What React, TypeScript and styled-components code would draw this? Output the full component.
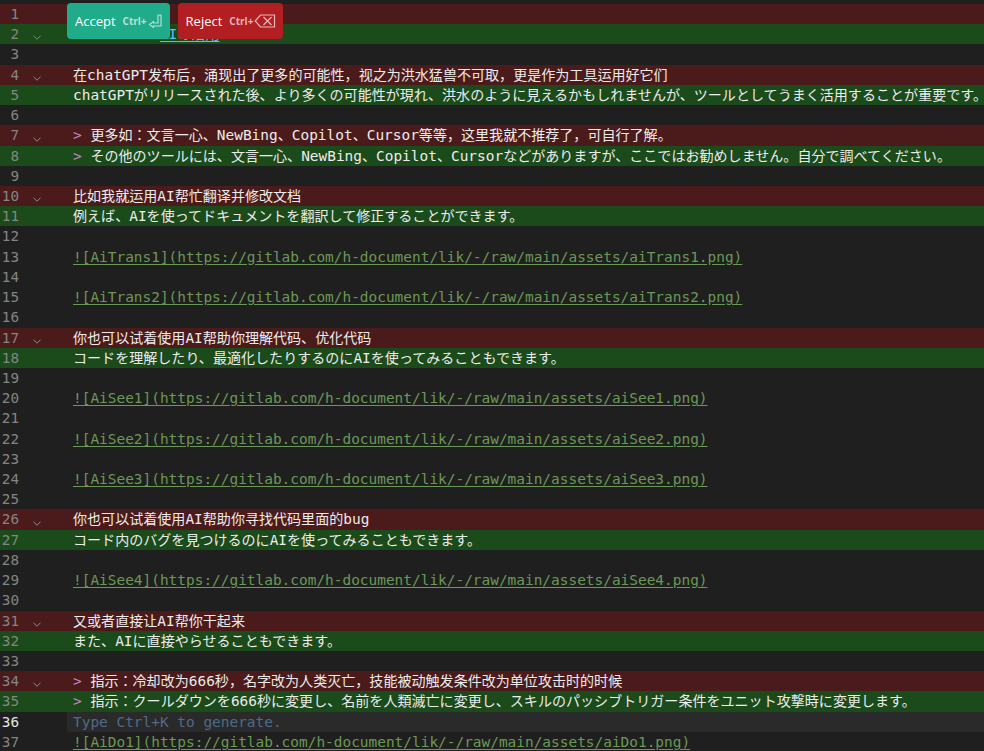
import React from 'react';
import styled, { createGlobalStyle } from 'styled-components';

const GlobalStyle = createGlobalStyle`
  html, body { margin: 0; padding: 0; background: #1f1f1f; }
  body { overflow: hidden; }
  #root { width: 984px; height: 751px; }
`;

type Tone = 'plain' | 'del' | 'add' | 'current';
type SegKind = 'text' | 'quote' | 'link' | 'hint' | 'head';
type Seg = { t: string; k?: SegKind };
type Line = { tone: Tone; fold?: boolean; segs: Seg[] };

const ROW_H = 20.22;

const toneBg: Record<Tone, string> = {
  plain: 'transparent',
  del: '#4b1a1a',
  add: '#1b4a1b',
  current: 'transparent',
};

const segColor: Record<SegKind, string> = {
  text: '#ececec',
  quote: '#c586c0',
  link: '#6a9955',
  hint: '#4f6b8c',
  head: '#4fc1ff',
};

const Editor = styled.div`
  position: relative;
  width: 984px;
  height: 751px;
  overflow: hidden;
  background: #1f1f1f;
  padding-top: 4px;
  box-sizing: border-box;
`;

const Row = styled.div<{ $tone: Tone }>`
  display: grid;
  grid-template-columns: 19px 48px 1fr;
  height: ${ROW_H}px;
  background: ${(p) => toneBg[p.$tone]};
`;

const LineNo = styled.div<{ $active: boolean }>`
  font-family: 'DejaVu Sans Mono', monospace;
  font-size: 14.3px;
  line-height: ${ROW_H}px;
  text-align: right;
  color: ${(p) => (p.$active ? '#e8e8e8' : '#858585')};
`;

const FoldCell = styled.div`
  display: flex;
  align-items: flex-end;
  padding: 0 0 4px 14px;
  box-sizing: border-box;
  color: #8a8a8a;
`;

const Code = styled.div<{ $current: boolean }>`
  padding-left: 6px;
  white-space: pre;
  overflow: hidden;
  font-family: 'DejaVu Sans Mono', 'Noto Sans CJK JP', 'Noto Sans CJK SC', monospace;
  font-size: 14.05px;
  line-height: ${ROW_H}px;
  color: #ececec;
  background: ${(p) => (p.$current ? '#2a2a2a' : 'transparent')};
`;

const Segment = styled.span<{ $kind: SegKind }>`
  color: ${(p) => segColor[p.$kind]};
  text-decoration: ${(p) => (p.$kind === 'link' || p.$kind === 'head' ? 'underline' : 'none')};
  text-underline-offset: 2px;
`;

const Latin = styled.span`
  font-size: 14.45px;
`;

const Actions = styled.div`
  position: absolute;
  top: 3px;
  left: 67px;
  display: flex;
  gap: 8px;
`;

const ActionButton = styled.button<{ $variant: 'accept' | 'reject' }>`
  height: 36px;
  padding: 0 7px 0 8px;
  border: none;
  border-radius: 4px;
  display: flex;
  align-items: center;
  gap: 7px;
  background: ${(p) => (p.$variant === 'accept' ? '#20ab8b' : '#b11f22')};
  color: #ffffff;
  font-family: 'Open Sans', 'Noto Sans', sans-serif;
  font-size: 13px;
  cursor: pointer;
`;

const Shortcut = styled.span`
  display: flex;
  align-items: center;
  gap: 1px;
  font-family: 'Open Sans', 'Noto Sans', sans-serif;
  font-size: 10px;
  font-weight: 700;
  color: rgba(255, 255, 255, 0.68);
`;

const ChevronIcon = () => (
  <svg width="8" height="5" viewBox="0 0 8 5" fill="none">
    <path d="M0.5 0.8 L4 4.2 L7.5 0.8" stroke="currentColor" strokeWidth="1" />
  </svg>
);

const EnterIcon = () => (
  <svg width="15" height="14" viewBox="0 0 15 14" fill="none">
    <path
      d="M10 1 H13 V12 H5.5 V13.5 L1.5 10.5 L5.5 7.5 V9 H10 Z"
      stroke="currentColor"
      strokeWidth="1.1"
      strokeLinejoin="miter"
    />
  </svg>
);

const BackspaceIcon = () => (
  <svg width="22" height="14" viewBox="0 0 22 14" fill="none">
    <path d="M1.2 7 L6.5 1 H20.5 V13 H6.5 Z" stroke="currentColor" strokeWidth="1.2" />
    <path d="M9.5 3 L17.5 11 M17.5 3 L9.5 11" stroke="currentColor" strokeWidth="1.2" />
  </svg>
);

const splitScript = (s: string) => s.split(/([\x00-\x7F]+)/).filter((x) => x.length > 0);

const renderText = (s: string) =>
  splitScript(s).map((part, i) =>
    /^[\x00-\x7F]+$/.test(part) ? <Latin key={i}>{part}</Latin> : <React.Fragment key={i}>{part}</React.Fragment>
  );

const link = (name: string, file: string): Seg[] => [
  { t: `![${name}](https://gitlab.com/h-document/lik/-/raw/main/assets/${file}.png)`, k: 'link' },
];
const quote = (t: string): Seg[] => [{ t: '>', k: 'quote' }, { t: ' ' + t }];
const empty: Line = { tone: 'plain', segs: [] };

const lines: Line[] = [
  { tone: 'del', segs: [] },
  { tone: 'add', fold: true, segs: [{ t: '          ' }, { t: 'AIの活用', k: 'head' }] },
  empty,
  { tone: 'del', fold: true, segs: [{ t: '在chatGPT发布后，涌现出了更多的可能性，视之为洪水猛兽不可取，更是作为工具运用好它们' }] },
  { tone: 'add', segs: [{ t: 'chatGPTがリリースされた後、より多くの可能性が現れ、洪水のように見えるかもしれませんが、ツールとしてうまく活用することが重要です。' }] },
  empty,
  { tone: 'del', fold: true, segs: quote('更多如：文言一心、NewBing、Copilot、Cursor等等，这里我就不推荐了，可自行了解。') },
  { tone: 'add', segs: quote('その他のツールには、文言一心、NewBing、Copilot、Cursorなどがありますが、ここではお勧めしません。自分で調べてください。') },
  empty,
  { tone: 'del', fold: true, segs: [{ t: '比如我就运用AI帮忙翻译并修改文档' }] },
  { tone: 'add', segs: [{ t: '例えば、AIを使ってドキュメントを翻訳して修正することができます。' }] },
  empty,
  { tone: 'plain', segs: link('AiTrans1', 'aiTrans1') },
  empty,
  { tone: 'plain', segs: link('AiTrans2', 'aiTrans2') },
  empty,
  { tone: 'del', fold: true, segs: [{ t: '你也可以试着使用AI帮助你理解代码、优化代码' }] },
  { tone: 'add', segs: [{ t: 'コードを理解したり、最適化したりするのにAIを使ってみることもできます。' }] },
  empty,
  { tone: 'plain', segs: link('AiSee1', 'aiSee1') },
  empty,
  { tone: 'plain', segs: link('AiSee2', 'aiSee2') },
  empty,
  { tone: 'plain', segs: link('AiSee3', 'aiSee3') },
  empty,
  { tone: 'del', fold: true, segs: [{ t: '你也可以试着使用AI帮助你寻找代码里面的bug' }] },
  { tone: 'add', segs: [{ t: 'コード内のバグを見つけるのにAIを使ってみることもできます。' }] },
  empty,
  { tone: 'plain', segs: link('AiSee4', 'aiSee4') },
  empty,
  { tone: 'del', fold: true, segs: [{ t: '又或者直接让AI帮你干起来' }] },
  { tone: 'add', segs: [{ t: 'また、AIに直接やらせることもできます。' }] },
  empty,
  { tone: 'del', fold: true, segs: quote('指示：冷却改为666秒，名字改为人类灭亡，技能被动触发条件改为单位攻击时的时候') },
  { tone: 'add', segs: quote('指示：クールダウンを666秒に変更し、名前を人類滅亡に変更し、スキルのパッシブトリガー条件をユニット攻撃時に変更します。') },
  { tone: 'current', segs: [{ t: 'Type Ctrl+K to generate.', k: 'hint' }] },
  { tone: 'plain', segs: link('AiDo1', 'aiDo1') },
];

export default function App() {
  return (
    <>
      <GlobalStyle />
      <Editor>
        {lines.map((line, i) => (
          <Row key={i} $tone={line.tone}>
            <LineNo $active={line.tone === 'current'}>{i + 1}</LineNo>
            <FoldCell>{line.fold ? <ChevronIcon /> : null}</FoldCell>
            <Code $current={line.tone === 'current'}>
              {line.segs.map((s, j) => (
                <Segment key={j} $kind={s.k ?? 'text'}>
                  {renderText(s.t)}
                </Segment>
              ))}
            </Code>
          </Row>
        ))}
        <Actions>
          <ActionButton $variant="accept">
            Accept
            <Shortcut>
              Ctrl+
              <EnterIcon />
            </Shortcut>
          </ActionButton>
          <ActionButton $variant="reject">
            Reject
            <Shortcut>
              Ctrl+
              <BackspaceIcon />
            </Shortcut>
          </ActionButton>
        </Actions>
      </Editor>
    </>
  );
}
